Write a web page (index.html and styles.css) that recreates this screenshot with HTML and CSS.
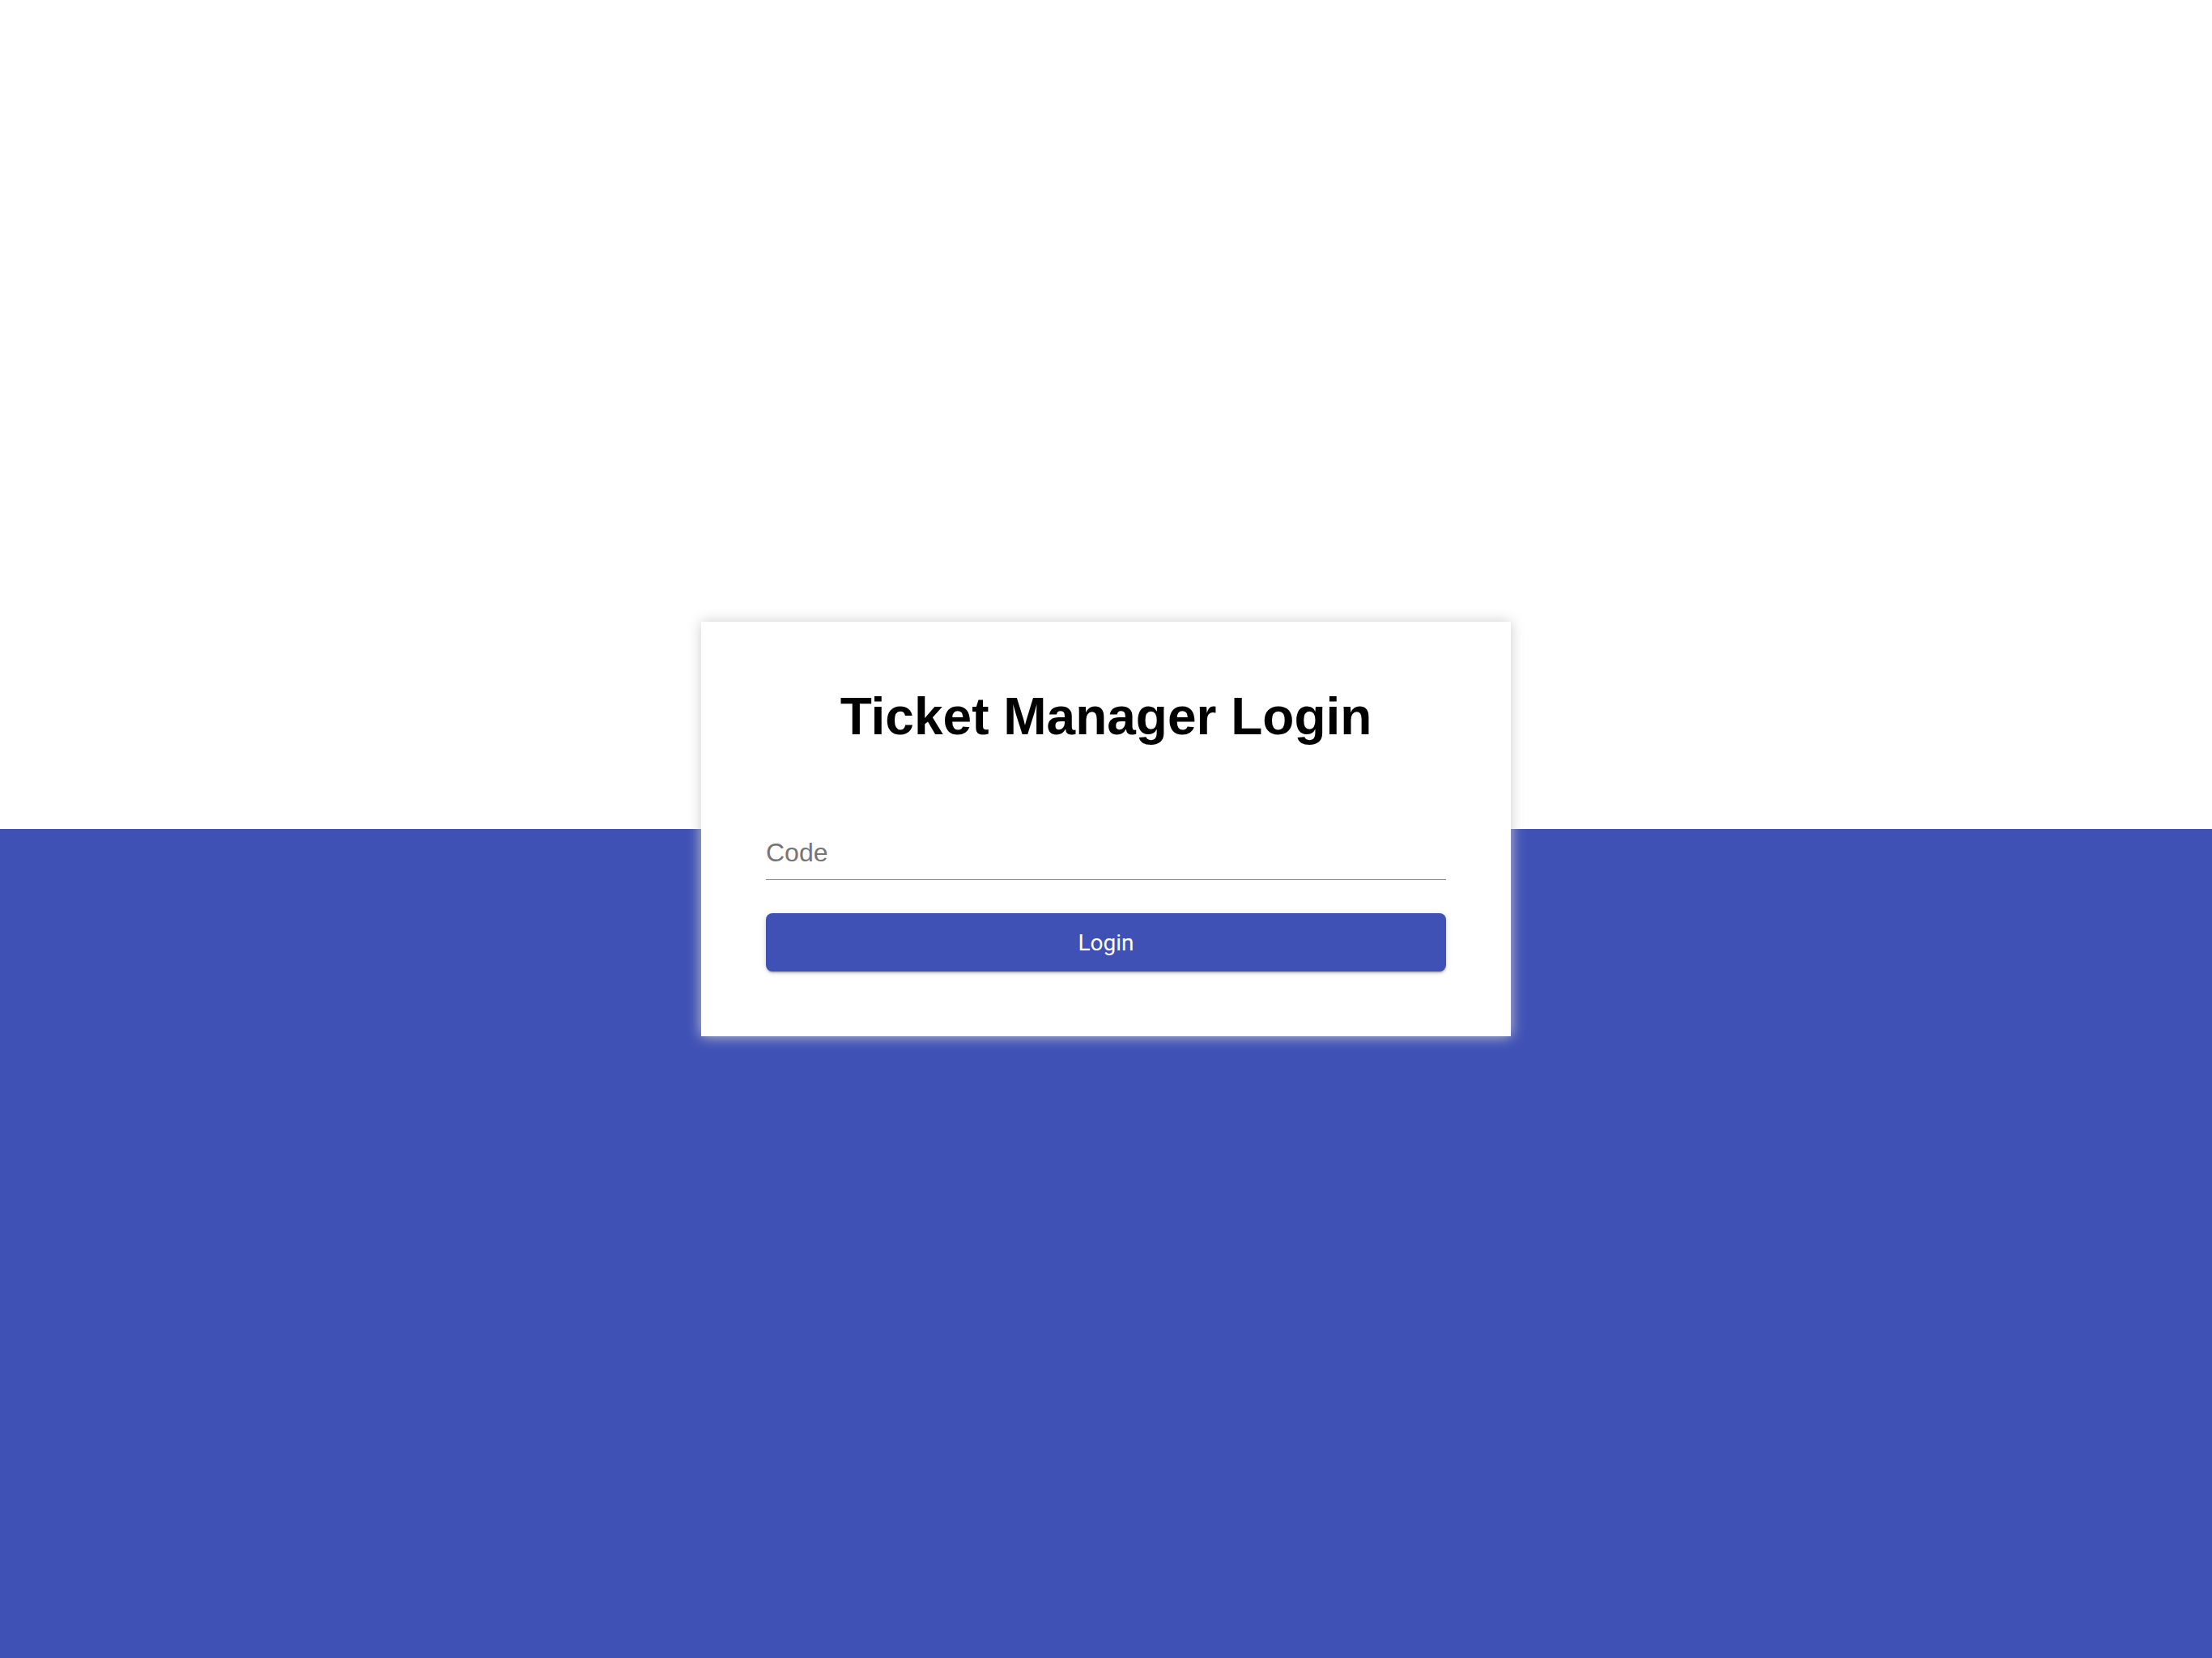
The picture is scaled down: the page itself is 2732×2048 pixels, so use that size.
FILE: index.html
```html
<!DOCTYPE html>
<html lang="en">
<head>
<meta charset="utf-8">
<title>Ticket Manager Login</title>
<link rel="stylesheet" href="styles.css">
</head>
<body>
<div class="page">
  <div class="top"></div>
  <div class="bottom"></div>
  <div class="center">
    <div class="card">
      <h1 class="title">Ticket Manager Login</h1>
      <div class="field">
        <input class="input" type="text" placeholder="Code">
      </div>
      <button class="btn" type="button">Login</button>
    </div>
  </div>
</div>
</body>
</html>
```

FILE: styles.css
```css
html, body {
  margin: 0;
  padding: 0;
  width: 2732px;
  height: 2048px;
  overflow: hidden;
}
.page {
  position: relative;
  width: 2732px;
  height: 2048px;
  display: flex;
  flex-direction: column;
}
.top {
  height: 1024px;
  background: #ffffff;
}
.bottom {
  height: 1024px;
  background: #3f51b5;
}
.center {
  position: absolute;
  inset: 0;
  display: flex;
  align-items: center;
  justify-content: center;
}
.card {
  box-sizing: border-box;
  width: 1000px;
  height: 512px;
  background: #ffffff;
  padding: 80px;
  box-shadow: 0 0 16px #cccccc;
  display: flex;
  flex-direction: column;
}
.title {
  margin: 0;
  font-family: "Liberation Sans", Arial, sans-serif;
  font-weight: 700;
  font-size: 64px;
  line-height: 74px;
  text-align: center;
  color: #000000;
}
.field {
  margin-top: 112px;
  border-bottom: 1px solid #8c8c8c;
  padding-bottom: 14px;
}
.input {
  display: block;
  width: 100%;
  box-sizing: border-box;
  border: 0;
  outline: none;
  padding: 0;
  margin: 0;
  background: transparent;
  font-family: "Liberation Sans", Arial, sans-serif;
  font-size: 32px;
  line-height: 38px;
  height: 38px;
  color: #000;
}
.input::placeholder {
  color: #757575;
  opacity: 1;
}
.btn {
  margin-top: 41px;
  height: 72px;
  width: 100%;
  border: 0;
  border-radius: 8px;
  background: #3f51b5;
  color: #ffffff;
  font-family: Roboto, "Liberation Sans", sans-serif;
  font-size: 28px;
  font-weight: 400;
  box-shadow: 0 3px 2px -2px rgba(0,0,0,.2), 0 2px 3px 0 rgba(0,0,0,.14), 0 1px 8px 0 rgba(0,0,0,.12);
  cursor: pointer;
}
```
